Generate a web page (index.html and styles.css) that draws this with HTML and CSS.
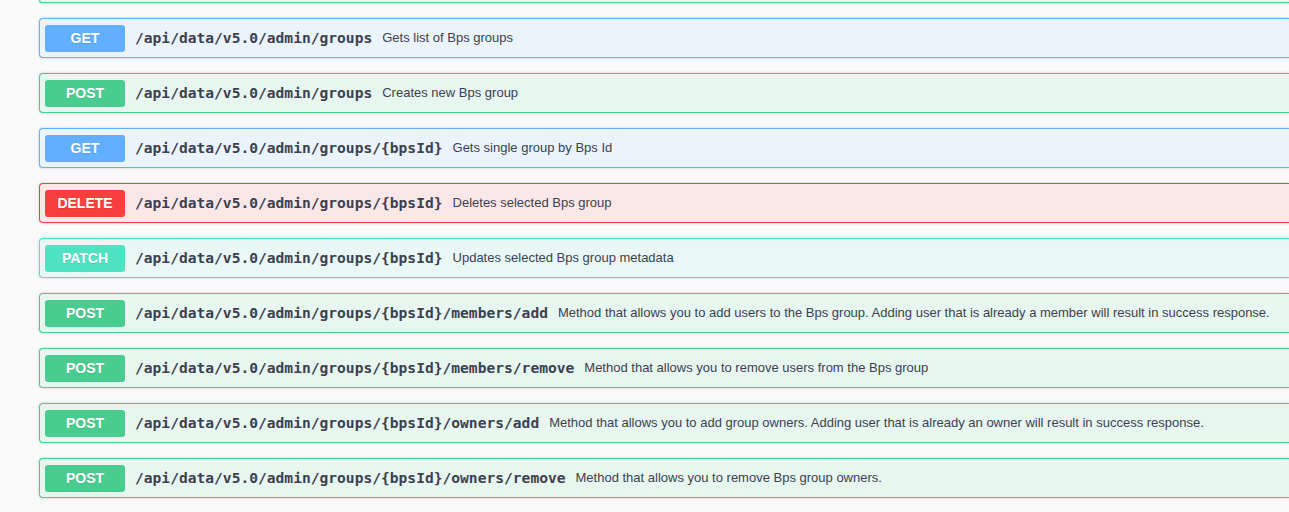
FILE: index.html
```html
<!DOCTYPE html>
<html>
<head>
<meta charset="utf-8">
<link rel="stylesheet" href="styles.css">
</head>
<body>
<div class="ops">
  <div class="op-tail"></div>
  <div class="op get"><span class="method">GET</span><span class="path">/api/data/v5.0/admin/groups</span><span class="desc">Gets list of Bps groups</span></div>
  <div class="op post"><span class="method">POST</span><span class="path">/api/data/v5.0/admin/groups</span><span class="desc">Creates new Bps group</span></div>
  <div class="op get"><span class="method">GET</span><span class="path">/api/data/v5.0/admin/groups/{bpsId}</span><span class="desc">Gets single group by Bps Id</span></div>
  <div class="op delete"><span class="method">DELETE</span><span class="path">/api/data/v5.0/admin/groups/{bpsId}</span><span class="desc">Deletes selected Bps group</span></div>
  <div class="op patch"><span class="method">PATCH</span><span class="path">/api/data/v5.0/admin/groups/{bpsId}</span><span class="desc">Updates selected Bps group metadata</span></div>
  <div class="op post"><span class="method">POST</span><span class="path">/api/data/v5.0/admin/groups/{bpsId}/members/add</span><span class="desc">Method that allows you to add users to the Bps group. Adding user that is already a member will result in success response.</span></div>
  <div class="op post"><span class="method">POST</span><span class="path">/api/data/v5.0/admin/groups/{bpsId}/members/remove</span><span class="desc">Method that allows you to remove users from the Bps group</span></div>
  <div class="op post"><span class="method">POST</span><span class="path">/api/data/v5.0/admin/groups/{bpsId}/owners/add</span><span class="desc">Method that allows you to add group owners. Adding user that is already an owner will result in success response.</span></div>
  <div class="op post"><span class="method">POST</span><span class="path">/api/data/v5.0/admin/groups/{bpsId}/owners/remove</span><span class="desc">Method that allows you to remove Bps group owners.</span></div>
</div>
</body>
</html>
```
FILE: styles.css
```css
html, body {
  margin: 0;
  padding: 0;
  background: #fafafa;
  overflow: hidden;
  height: 512px;
}
.ops {
  margin-left: 39px;
  display: flex;
  flex-direction: column;
  gap: 15px;
}
.op-tail {
  box-sizing: border-box;
  height: 3px;
  background: #e8f6f0;
  border: 1px solid #49cc90;
  border-top: 0;
  border-right: 0;
  border-radius: 0 0 0 4px;
  box-shadow: 0 1px 3px rgba(0,0,0,0.12);
}
.op {
  box-sizing: border-box;
  height: 40px;
  border: 1px solid;
  border-right-width: 0;
  border-radius: 4px 0 0 4px;
  padding: 5px;
  display: flex;
  align-items: center;
  box-shadow: 0 0 3px rgba(0,0,0,0.19);
  color: #3b4151;
}
.method {
  box-sizing: border-box;
  width: 80px;
  height: 27px;
  padding-bottom: 1px;
  border-radius: 3px;
  display: flex;
  align-items: center;
  justify-content: center;
  font-family: "Liberation Sans", Arial, sans-serif;
  font-weight: 700;
  font-size: 14px;
  color: #fff;
  text-shadow: 0 1px 0 rgba(0,0,0,0.1);
  flex-shrink: 0;
}
.path {
  padding: 0 10px;
  margin-bottom: 2px;
  font-family: "DejaVu Sans Mono", "Liberation Mono", monospace;
  font-weight: 700;
  font-size: 14.6px;
  color: #3b4151;
  white-space: nowrap;
}
.desc {
  margin-bottom: 2px;
  font-family: "Liberation Sans", Arial, sans-serif;
  font-size: 13px;
  color: #3b4151;
  white-space: nowrap;
}
.get { background: #ebf3fb; border-color: #61affe; }
.get .method { background: #61affe; }
.post { background: #e8f6f0; border-color: #49cc90; }
.post .method { background: #49cc90; }
.delete { background: #fae7e7; border-color: #f93e3e; }
.delete .method { background: #f93e3e; }
.patch { background: #e9f8f5; border-color: #50e3c2; }
.patch .method { background: #50e3c2; }
```
